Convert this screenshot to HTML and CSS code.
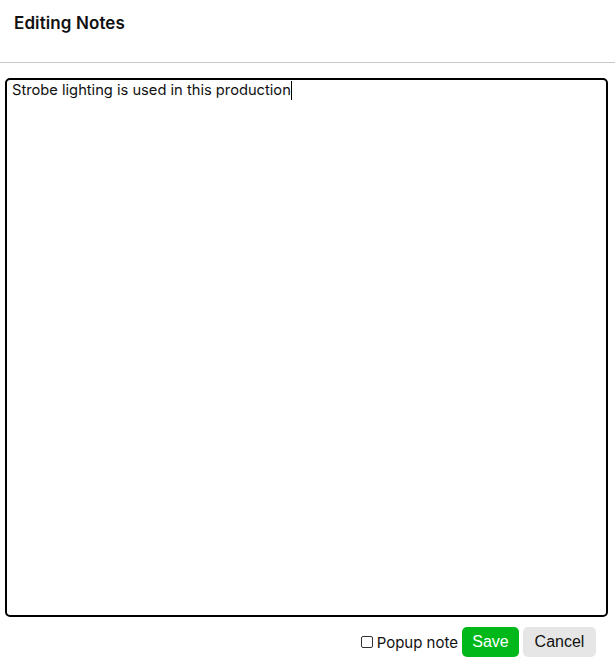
FILE: index.html
```html
<!DOCTYPE html>
<html>
<head>
<meta charset="utf-8">
<link rel="stylesheet" href="styles.css">
</head>
<body>
<div class="dialog">
  <div class="header"><h1 class="title">Editing Notes</h1></div>
  <div class="content">
    <div class="editor">Strobe lighting is used in this production<span class="caret"></span></div>
  </div>
  <div class="footer">
    <label class="check"><span class="box"></span>Popup note</label>
    <button class="btn save">Save</button>
    <button class="btn cancel">Cancel</button>
  </div>
</div>
</body>
</html>
```
FILE: styles.css
```css
html, body { margin: 0; padding: 0; background: #fff; }
body { font-family: Inter, "Noto Sans", sans-serif; color: #111; }
.dialog { width: 615px; }
.header { height: 63px; border-bottom: 1px solid #c8c8c8; padding: 0 14px; display: flex; align-items: flex-start; box-sizing: border-box; }
.title { margin: 13px 0 0; font-size: 17px; font-weight: 600; letter-spacing: 0.1px; color: #111; }
.content { padding: 15px 7px 0 5px; }
.editor { box-sizing: border-box; height: 539px; border: 2px solid #000; border-radius: 5px; padding: 1px 5px; font-size: 14.7px; line-height: 19px; color: #111; }
.caret { display: inline-block; width: 1px; height: 19px; background: #000; vertical-align: -5px; }
.footer { display: flex; justify-content: flex-end; align-items: center; gap: 4px; padding: 10px 19px 0 0; }
.check { display: flex; align-items: center; font-size: 15px; color: #111; }
.box { width: 12px; height: 12px; border: 1px solid #333; border-radius: 2px; margin-right: 4px; box-sizing: border-box; }
.btn { font-family: "Liberation Sans", Arial, sans-serif; font-size: 16px; border: none; border-radius: 5px; height: 30px; padding: 0; }
.save { background: #00b81a; color: #fff; width: 57px; }
.cancel { background: #e6e6e6; color: #111; width: 73px; }
```
